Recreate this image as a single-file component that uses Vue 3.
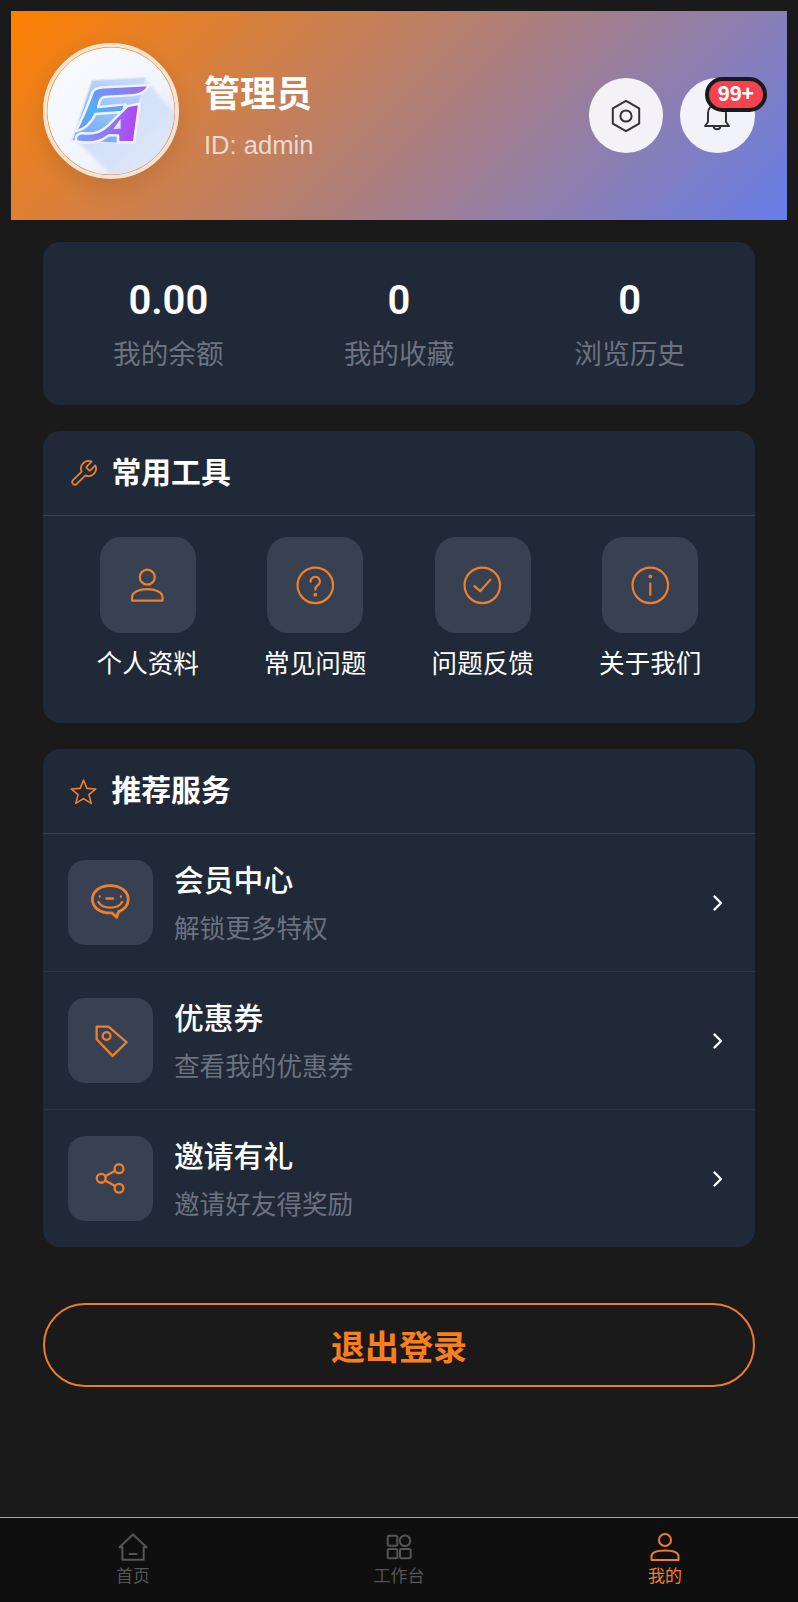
<script setup>
const stats = [
  { value: '0.00', label: '我的余额' },
  { value: '0', label: '我的收藏' },
  { value: '0', label: '浏览历史' },
]
const tools = [
  { key: 'user', label: '个人资料' },
  { key: 'help', label: '常见问题' },
  { key: 'check', label: '问题反馈' },
  { key: 'info', label: '关于我们' },
]
const services = [
  { key: 'chat', title: '会员中心', sub: '解锁更多特权' },
  { key: 'tag', title: '优惠券', sub: '查看我的优惠券' },
  { key: 'share', title: '邀请有礼', sub: '邀请好友得奖励' },
]
</script>

<template>
  <div class="page">
    <header class="hero">
      <div class="avatar">
        <svg class="logo" viewBox="0 0 128 128">
          <defs>
            <linearGradient id="bgG" x1="0" y1="0" x2="1" y2="1">
              <stop offset="0" stop-color="#fbfcff" />
              <stop offset="0.6" stop-color="#f1f5fc" />
              <stop offset="1" stop-color="#d6e2f8" />
            </linearGradient>
            <linearGradient id="shade" x1="0.1" y1="0.1" x2="0.9" y2="0.9">
              <stop offset="0" stop-color="#9dbbf0" />
              <stop offset="0.6" stop-color="#c3d5f6" />
              <stop offset="1" stop-color="#dbe6f9" stop-opacity="0.3" />
            </linearGradient>
            <linearGradient id="plate" x1="0.6" y1="0" x2="0.2" y2="1">
              <stop offset="0" stop-color="#c4d9fb" />
              <stop offset="1" stop-color="#6aa8f8" />
            </linearGradient>
            <linearGradient id="inkF" x1="0" y1="1" x2="1" y2="0">
              <stop offset="0" stop-color="#6f8ff8" />
              <stop offset="0.35" stop-color="#4fb2fb" />
              <stop offset="1" stop-color="#a862f2" />
            </linearGradient>
            <linearGradient id="inkA" x1="0" y1="0.5" x2="1" y2="0.6">
              <stop offset="0" stop-color="#7ea6f8" />
              <stop offset="0.5" stop-color="#8f78f6" />
              <stop offset="1" stop-color="#b83df0" />
            </linearGradient>
            <filter id="soft" x="-10%" y="-10%" width="120%" height="120%">
              <feGaussianBlur stdDeviation="0.35" />
            </filter>
            <filter id="softer" x="-20%" y="-20%" width="140%" height="140%">
              <feGaussianBlur stdDeviation="1.6" />
            </filter>
            <clipPath id="disc"><circle cx="64" cy="64" r="63.6" /></clipPath>
          </defs>
          <g clip-path="url(#disc)">
            <rect width="128" height="128" fill="url(#bgG)" />
            <path d="M28 92 L100 34 L130 70 L130 135 L72 135 Z" fill="url(#shade)" opacity="0.5" filter="url(#softer)" />
            <g transform="translate(9.3 23) scale(0.374 0.344)" filter="url(#soft)" stroke-linejoin="round">
              <path d="M95 30 L240 22 L195 215 L42 205 Z" fill="url(#plate)" stroke="#dbe7fb" stroke-width="4" />
              <path d="M98 62 C105 52 115 50 130 50 L248 44 C240 62 228 72 205 73 L130 78 C122 79 118 84 116 92 L112 108 L185 100 L178 122 L105 128 C95 150 80 172 52 178 C66 150 85 100 98 62 Z" fill="url(#inkF)" stroke="#eef3fe" stroke-width="7" />
              <path d="M190 105 L222 98 L208 210 L165 210 L165 190 L140 190 C120 208 90 215 55 208 C48 195 55 185 70 183 C105 190 125 175 140 160 Z" fill="url(#inkA)" stroke="#eef3fe" stroke-width="7" />
              <path d="M172 142 L172 170 L152 172 Z" fill="#e4e6fd" />
            </g>
          </g>
        </svg>
      </div>
      <div class="who">
        <div class="name">管理员</div>
        <div class="uid">ID: admin</div>
      </div>
      <div class="actions">
        <button class="round">
          <svg class="round-ic" viewBox="0 0 32 32" fill="none" stroke="#333" stroke-width="2" stroke-linejoin="round">
            <path d="M16 0.9 L29.2 8.4 V23.6 L16 31.1 L2.8 23.6 V8.4 Z" />
            <circle cx="16" cy="16" r="5.6" />
          </svg>
        </button>
        <button class="round">
          <svg class="round-ic" viewBox="0 0 32 32" fill="none" stroke="#333" stroke-width="2" stroke-linejoin="round" stroke-linecap="round">
            <path d="M7 22 V13 A9 9 0 0 1 25 13 V22 L28 26 H4 Z" />
            <path d="M12.5 26.5 A3.6 3.6 0 0 0 19.5 26.5" />
          </svg>
          <span class="badge">99+</span>
        </button>
      </div>
    </header>

    <main class="content">
      <section class="card stats">
        <div v-for="s in stats" :key="s.label" class="stat">
          <div class="stat-v">{{ s.value }}</div>
          <div class="stat-l">{{ s.label }}</div>
        </div>
      </section>

      <section class="card">
        <div class="card-head">
          <svg class="head-ic" viewBox="1.2 1.2 21.6 21.6" fill="none" stroke="#f07f2a" stroke-width="1.4" stroke-linejoin="round" stroke-linecap="round">
            <path d="M14.7 6.3a1 1 0 0 0 0 1.4l1.6 1.6a1 1 0 0 0 1.4 0l3.77-3.77a6 6 0 0 1-7.94 7.94l-6.91 6.91a2.12 2.12 0 0 1-3-3l6.91-6.91a6 6 0 0 1 7.94-7.94l-3.76 3.76z" />
          </svg>
          <h2>常用工具</h2>
        </div>
        <div class="tools">
          <div v-for="t in tools" :key="t.key" class="tool">
            <div class="tool-box">
              <svg class="ic" viewBox="0 0 24 24" fill="none" stroke="#f07f2a" stroke-width="1.25" stroke-linecap="round" stroke-linejoin="round">
                <template v-if="t.key === 'user'">
                  <circle cx="12" cy="7.4" r="4.2" />
                  <path d="M3.4 20.6 V18.8 C3.4 15.7 7.6 14.2 12 14.2 C16.4 14.2 20.6 15.7 20.6 18.8 V20.6 Z" />
                </template>
                <template v-else-if="t.key === 'help'">
                  <circle cx="12" cy="12" r="10" />
                  <path d="M9.4 9.9 A2.6 2.6 0 1 1 13.4 12 C12.5 12.6 12 13.1 12 14.4" />
                  <circle cx="12" cy="17.3" r="0.45" />
                </template>
                <template v-else-if="t.key === 'check'">
                  <circle cx="12" cy="12" r="10" />
                  <path d="M7.6 12.5 L10.8 15.3 L16.6 8.8" />
                </template>
                <template v-else>
                  <circle cx="12" cy="12" r="10" />
                  <path d="M12 11 V17.4" />
                  <circle cx="12" cy="7" r="0.45" />
                </template>
              </svg>
            </div>
            <div class="tool-l">{{ t.label }}</div>
          </div>
        </div>
      </section>

      <section class="card">
        <div class="card-head">
          <svg class="head-ic" viewBox="0 0 24 24" fill="none" stroke="#f07f2a" stroke-width="1.4" stroke-linejoin="round">
            <path d="M12 1.8 L15 9.2 L23 9.7 L16.8 14.8 L18.9 22.6 L12 18.3 L5.1 22.6 L7.2 14.8 L1 9.7 L9 9.2 Z" />
          </svg>
          <h2>推荐服务</h2>
        </div>
        <div v-for="s in services" :key="s.key" class="row">
          <div class="row-box">
            <svg class="ic" viewBox="0 0 24 24" fill="none" stroke="#f07f2a" stroke-width="1.3" stroke-linecap="round" stroke-linejoin="round">
              <template v-if="s.key === 'chat'">
                <path d="M12 2.6 C6 2.6 1.9 6 1.9 10.3 C1.9 14.7 6 18 12 18 H13 L15.6 20.4 L16.6 17.3 C20 16 22.1 13.4 22.1 10.3 C22.1 6 18 2.6 12 2.6 Z" stroke-width="1.6" />
                <path d="M5.3 11.8 C7.5 16 16.5 16 18.7 11.8" stroke-width="1.3" />
                <path d="M9.9 9.8 H13.5" stroke-width="1.4" />
                <path d="M6 8.6 V8.9 M18 8.6 V8.9" stroke-width="1.2" />
              </template>
              <template v-else-if="s.key === 'tag'">
                <path d="M4.3 4.3 H11 L21.2 13.1 L13.3 20.8 L4.3 11.4 Z" />
                <circle cx="9.9" cy="9.6" r="2.2" />
              </template>
              <template v-else>
                <circle cx="16.9" cy="6.6" r="2.5" />
                <circle cx="6.9" cy="12" r="2.5" />
                <circle cx="16.9" cy="17.6" r="2.5" />
                <path d="M9.1 10.8 L14.7 7.8 M9.1 13.2 L14.7 16.4" />
              </template>
            </svg>
          </div>
          <div class="row-text">
            <div class="row-t">{{ s.title }}</div>
            <div class="row-s">{{ s.sub }}</div>
          </div>
          <svg class="chev" viewBox="0 0 14 20" fill="none" stroke="#fff" stroke-width="2.4" stroke-linecap="round" stroke-linejoin="round">
            <path d="M3.5 3.5 L10 10 L3.5 16.5" />
          </svg>
        </div>
      </section>

      <button class="logout">退出登录</button>
    </main>

    <nav class="tabbar">
      <div class="tab">
        <svg class="tab-ic" viewBox="0 0 30 28" fill="none" stroke="#555" stroke-width="2" stroke-linejoin="round" stroke-linecap="round">
          <path d="M15 1.5 L28.5 14.3 H25.7 V26.7 H4.4 V14.3 H1.5 Z" />
          <path d="M11.5 21 H18.5" />
        </svg>
        <span>首页</span>
      </div>
      <div class="tab">
        <svg class="tab-ic" viewBox="0 0 30 28" fill="none" stroke="#555" stroke-width="2" stroke-linejoin="round">
          <rect x="3.7" y="2.7" width="9.6" height="10" rx="1.5" />
          <circle cx="21" cy="7.7" r="5.3" />
          <rect x="3.7" y="16" width="9.6" height="9.3" rx="1.5" />
          <rect x="16" y="16" width="10.7" height="9.3" rx="1.5" />
        </svg>
        <span>工作台</span>
      </div>
      <div class="tab on">
        <svg class="tab-ic" viewBox="0 0 30 28" fill="none" stroke="#f07f2a" stroke-width="2" stroke-linejoin="round">
          <circle cx="15" cy="7" r="6" />
          <path d="M1.5 27 V23.5 C1.5 19.6 7 17.5 15 17.5 C23 17.5 28.5 19.6 28.5 23.5 V27 Z" />
        </svg>
        <span>我的</span>
      </div>
    </nav>
  </div>
</template>

<style scoped>
.page {
  width: 798px;
  height: 1602px;
  display: flex;
  flex-direction: column;
  background: #1a1a1a;
  font-family: "Liberation Sans", "Noto Sans CJK SC", sans-serif;
  color: #fff;
  overflow: hidden;
}
.hero {
  margin: 11px 11px 0;
  height: 209px;
  padding: 0 32.5px 0 32px;
  display: flex;
  align-items: center;
  background: linear-gradient(135deg, #ff8000 0%, #667eea 100%);
}
.avatar {
  width: 128px;
  height: 128px;
  margin-bottom: 10px;
  border: 4px solid rgba(255, 255, 255, 0.78);
  border-radius: 50%;
  box-shadow: 0 8px 24px rgba(0, 0, 0, 0.1);
  flex: none;
  overflow: hidden;
}
.logo { width: 128px; height: 128px; display: block; }
.who { margin-left: 25px; flex: 1; }
.name { margin-top: 1px; font-size: 36px; font-weight: 700; line-height: 50px; }
.uid { margin-top: 7px; font-size: 25.6px; line-height: 36px; color: rgba(255, 255, 255, 0.72); }
.actions { display: flex; gap: 17px; }
.round {
  position: relative;
  width: 74.5px;
  height: 74.5px;
  border: 0;
  padding: 0;
  border-radius: 50%;
  background: rgba(255, 255, 255, 0.9);
  display: flex;
  align-items: center;
  justify-content: center;
}
.round-ic { width: 32px; height: 32px; }
.badge {
  position: absolute;
  top: -1px;
  right: -12px;
  height: 27px;
  padding: 0 8.5px;
  border: 4px solid #1a1a1a;
  border-radius: 18px;
  background: #f3434f;
  color: #fff;
  font-family: "Liberation Sans", sans-serif;
  font-size: 21.3px;
  font-weight: 700;
  line-height: 27px;
}
.content {
  flex: 1;
  padding: 22px 43px 0;
  display: flex;
  flex-direction: column;
  gap: 26px;
}
.card {
  background: #1f2937;
  border-radius: 17px;
  overflow: hidden;
}
.stats {
  height: 163px;
  box-sizing: border-box;
  padding: 3px 10px 0;
  display: flex;
  align-items: center;
}
.stat { flex: 1; text-align: center; }
.stat-v { font-size: 40px; font-weight: 600; line-height: 50px; font-family: Roboto, "Liberation Sans", sans-serif; }
.stat-l { margin-top: 9px; font-size: 27.7px; line-height: 40px; color: #6b7280; }
.card-head {
  height: 84px;
  display: flex;
  align-items: center;
  padding: 0 0 0 26.5px;
  border-bottom: 1px solid #374151;
}
.head-ic { width: 27px; height: 27px; flex: none; }
h2 {
  margin: 0 0 0 15px;
  font-size: 29.8px;
  line-height: 40px;
  font-weight: 700;
}
.tools {
  display: grid;
  grid-template-columns: repeat(4, 1fr);
  padding: 21px 21px 40px;
}
.tool { display: flex; flex-direction: column; align-items: center; }
.tool-box {
  width: 96px;
  height: 96px;
  border-radius: 21px;
  background: #374151;
  display: flex;
  align-items: center;
  justify-content: center;
}
.ic { width: 42.6px; height: 42.6px; }
.tool-l { margin-top: 12px; font-size: 25.6px; line-height: 38px; }
.row {
  height: 138px;
  box-sizing: border-box;
  padding: 0 26px 0 25px;
  display: flex;
  align-items: center;
  border-bottom: 1px solid #2b3544;
}
.row:last-child { height: 137px; border-bottom: 0; }
.row-box {
  width: 85px;
  height: 85px;
  border-radius: 17px;
  background: #374151;
  flex: none;
  display: flex;
  align-items: center;
  justify-content: center;
}
.row-text { flex: 1; margin-left: 21px; padding-top: 4px; }
.row-t { font-size: 29.8px; line-height: 40px; font-weight: 500; }
.row-s { margin-top: 9px; font-size: 25.6px; line-height: 38px; color: #6b7280; }
.chev { width: 14px; height: 20px; margin-right: 4px; flex: none; }
.logout {
  margin-top: 30px;
  height: 84px;
  border: 2px solid #ea7c2a;
  border-radius: 42px;
  background: transparent;
  color: #f97f1b;
  font-family: inherit;
  font-size: 34px;
  font-weight: 700;
}
.tabbar {
  height: 84px;
  flex: none;
  border-top: 1px solid #a8a8a8;
  background: #0f0f0f;
  display: grid;
  grid-template-columns: repeat(3, 1fr);
}
.tab {
  display: flex;
  flex-direction: column;
  align-items: center;
  padding-top: 15px;
  color: #555;
  font-size: 17px;
  line-height: 20px;
}
.tab.on { color: #f07f2a; }
.tab-ic { width: 30px; height: 28px; margin-bottom: 6px; }
</style>

<style>
html, body { background: #1a1a1a; }
</style>
